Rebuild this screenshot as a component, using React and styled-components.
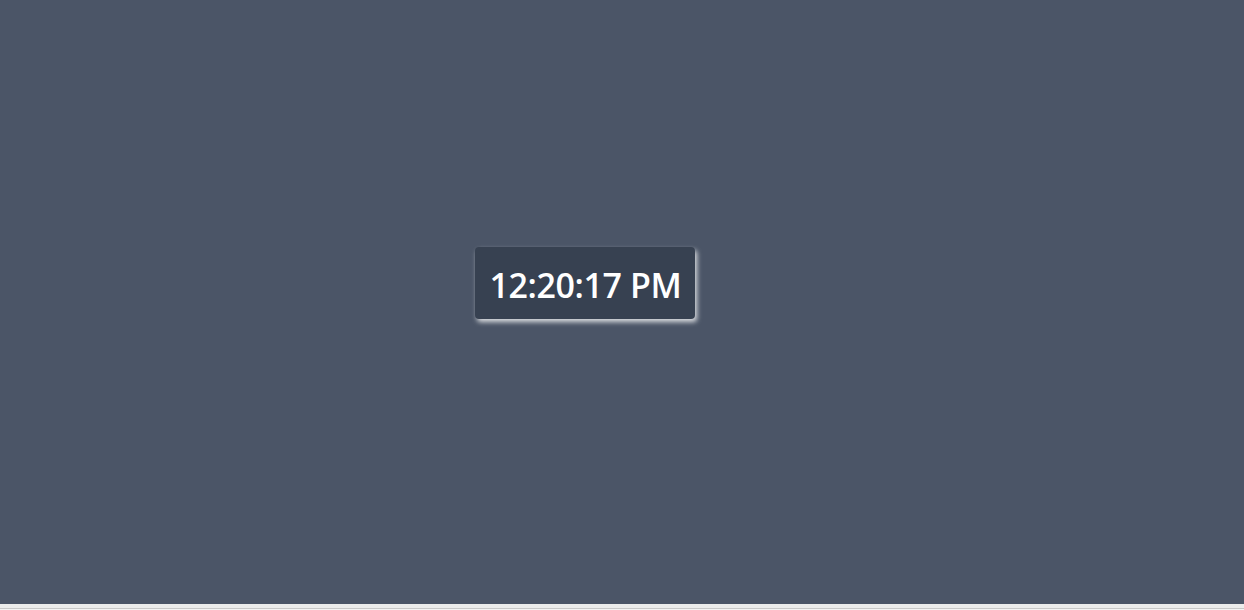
import styled, { createGlobalStyle } from "styled-components";

const GlobalStyle = createGlobalStyle`
  html, body {
    margin: 0;
    padding: 0;
    background: #f3f3f3;
  }
  body {
    font-family: "Open Sans", "Noto Sans", sans-serif;
  }
`;

const Screen = styled.main`
  height: 604px;
  background: #4b5567;
  display: flex;
  justify-content: center;
  align-items: center;
  padding: 0 74px 38px 0;
  box-sizing: border-box;
`;

const Bottom = styled.div`
  height: 4px;
  background: #ececec;
  border-bottom: 1px solid #c8c8c8;
`;

const Clock = styled.div`
  background: #374151;
  color: #ffffff;
  font-size: 34px;
  line-height: 40px;
  font-weight: 600;
  padding: 18px 14px 14px 15px;
  border-radius: 4px;
  box-shadow: 2px 3px 5px rgba(255, 255, 255, 0.8);
  letter-spacing: -0.4px;
`;

const App = () => {
  return (
    <>
      <GlobalStyle />
      <Screen>
        <Clock>12:20:17 PM</Clock>
      </Screen>
      <Bottom />
    </>
  );
};

export default App;
